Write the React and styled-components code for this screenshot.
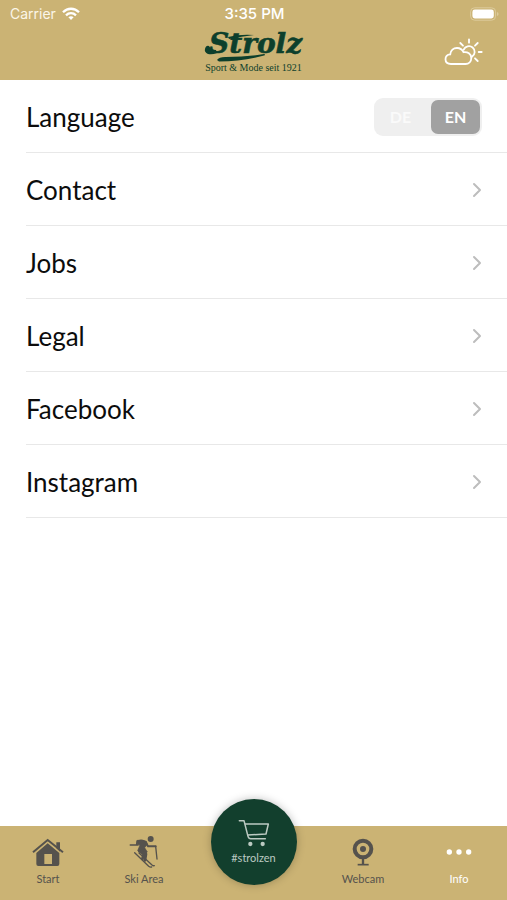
import React, { useState } from 'react';
import styled, { createGlobalStyle } from 'styled-components';
import { FiChevronRight } from 'react-icons/fi';

const GlobalStyle = createGlobalStyle`
  * {
    box-sizing: border-box;
  }
  body {
    margin: 0;
    background: #fff;
    font-family: Lato, "Liberation Sans", sans-serif;
  }
`;

const Page = styled.div`
  min-height: 100vh;
  display: flex;
  flex-direction: column;
`;

const Header = styled.header`
  background: #cbb374;
  color: #fff;
`;

const StatusBar = styled.div`
  height: 24px;
  padding: 4px 8px 0 10px;
  display: grid;
  grid-template-columns: 1fr auto 1fr;
  align-items: center;
  font-family: Inter, sans-serif;
  font-size: 14px;
  line-height: 20px;
`;

const Carrier = styled.div`
  display: flex;
  align-items: center;
  gap: 6px;
  color: #fbf6e8;
`;

const Clock = styled.time`
  font-size: 15px;
  font-weight: 500;
`;

const Battery = styled.div`
  display: flex;
  justify-content: flex-end;
`;

const Brand = styled.div`
  height: 56px;
  padding: 0 23px;
  display: grid;
  grid-template-columns: 1fr auto 1fr;
`;

const Logo = styled.a`
  grid-column: 2;
  display: flex;
  flex-direction: column;
  align-items: center;
  color: #0d3f2c;
  text-decoration: none;
`;

const Tagline = styled.span`
  font-family: "Liberation Serif", serif;
  font-size: 10px;
  line-height: 12px;
  white-space: nowrap;
`;

const WeatherButton = styled.button`
  justify-self: end;
  align-self: center;
  display: flex;
  padding: 0;
  border: 0;
  background: none;
  color: #fff;
  cursor: pointer;
`;

const List = styled.main`
  flex: 1;
  padding-left: 26px;
`;

const Row = styled.div`
  height: 73px;
  padding: 2px 25px 0 0;
  display: flex;
  align-items: center;
  justify-content: space-between;
  border-bottom: 1px solid #e8e8e8;
  color: #0c0c0c;
  font-size: 26px;
  line-height: 36px;
  text-decoration: none;
`;

const Chevron = styled(FiChevronRight)`
  width: 24px;
  height: 24px;
  margin-right: -7px;
  color: #bdbdbd;
`;

const Switch = styled.div`
  display: flex;
  gap: 6px;
  padding: 2px;
  border-radius: 9px;
  background: #efefef;
`;

const SwitchButton = styled.button`
  width: 49px;
  height: 34px;
  padding: 0;
  border: 0;
  border-radius: 7px;
  background: ${({ $active }) => ($active ? '#a1a1a1' : 'transparent')};
  color: ${({ $active }) => ($active ? '#fff' : '#fafafa')};
  font-family: Lato, sans-serif;
  font-size: 16px;
  font-weight: 700;
  line-height: 20px;
  cursor: pointer;
`;

const TabBar = styled.nav`
  position: sticky;
  bottom: 0;
  height: 74px;
  display: flex;
  background: #cbb374;
`;

const Tab = styled.a`
  flex: 1;
  padding-top: 9px;
  display: flex;
  flex-direction: column;
  align-items: center;
  gap: 3px;
  color: ${({ $active }) => ($active ? '#fff' : '#55524d')};
  text-decoration: none;
`;

const TabIcon = styled.span`
  height: 34px;
  display: flex;
  align-items: center;
`;

const TabLabel = styled.span`
  font-size: 11px;
  line-height: 14px;
`;

const ShopSlot = styled.div`
  width: 123px;
  display: flex;
  justify-content: center;
`;

const ShopButton = styled.a`
  width: 86px;
  height: 86px;
  margin-top: -27px;
  padding-top: 20px;
  display: flex;
  flex-direction: column;
  align-items: center;
  gap: 4px;
  border-radius: 50%;
  background: #123f2d;
  box-shadow: 0 0 8px rgba(0, 0, 0, 0.25);
  color: #bccac2;
  text-decoration: none;
`;

const WifiIcon = () => (
    <svg width="18" height="14" viewBox="0 0 18 14" fill="none" stroke="#fff" strokeWidth="2.3" aria-hidden="true">
        <path d="M1 5.2C5.6 0.6 12.4 0.6 17 5.2" />
        <path d="M4 8.3C6.9 5.5 11.1 5.5 14 8.3" />
        <path d="M6.4 10.3C7.9 9 10.1 9 11.6 10.3L9 13Z" fill="#fff" stroke="none" />
    </svg>
);

const BatteryIcon = () => (
    <svg width="29" height="14" viewBox="0 0 29 14" aria-hidden="true">
        <rect x="0.6" y="0.8" width="25" height="12.4" rx="4" fill="none" stroke="#dccb9c" />
        <rect x="2.4" y="2.6" width="21.4" height="8.8" rx="2.4" fill="#fff" />
        <path d="M27 5Q28.6 5.6 28.6 7T27 9Z" fill="#dccb9c" />
    </svg>
);

const LogoMark = () => (
    <svg width="100" height="38" viewBox="0 0 100 38" fill="currentColor" aria-hidden="true">
        <text
            x="5"
            y="29"
            fontFamily="DejaVu Serif, serif"
            fontSize="28"
            fontWeight="700"
            fontStyle="italic"
            stroke="currentColor"
            strokeWidth="0.6"
        >
            Strolz
        </text>
        <path d="M1 25Q2 21 5 22Q7 26 12 26L13 29Q8 31 4 30Q0 28 1 25Z" />
        <path d="M24 13Q36 10 50 11Q38 12.500 25 15Z" />
        <path d="M13 36Q15 32.800 22 33Q42 33 60 30Q62 30.500 60 31.500Q38 37.500 15 37.500Z" />
    </svg>
);

const WeatherIcon = () => (
    <svg width="42" height="32" viewBox="0 0 42 32" fill="none" stroke="currentColor" strokeWidth="1.8" strokeLinecap="round" aria-hidden="true">
        <path d="M9 28C5.5 28 3.5 26 3.5 23.300C3.5 20.500 5.5 18.600 8.2 18.400C8.5 14.500 11.500 12 15 12C18 12 20.300 13.500 21.500 16.200C25.500 15.500 29.300 18 29.300 22C29.300 25.500 26.800 28 23.500 28Z" />
        <path d="M21.700 13.700A5.7 5.7 0 1 1 30 20.700" />
        <path d="M27 3.3V6.7M33 9.7L35.700 7M36.700 16H39.700M33 22.300L35.700 25M21 9.7L18.300 7" />
    </svg>
);

const HomeIcon = () => (
    <svg width="32" height="28" viewBox="0 0 96 84" aria-hidden="true">
        <path d="M73 31V13H84V41Z" fill="currentColor" />
        <path d="M3 43L47 6L93 43" fill="none" stroke="currentColor" strokeWidth="6" />
        <path fillRule="evenodd" d="M47 16L82 45V78Q82 84 76 84H19Q13 84 13 78V45ZM37 48V78H60V48Z" fill="currentColor" />
    </svg>
);

const SkiIcon = () => (
    <svg width="32" height="34" viewBox="0 0 96 102" fill="none" stroke="currentColor" strokeLinecap="round" strokeLinejoin="round" aria-hidden="true">
        <circle cx="68" cy="12" r="9" fill="currentColor" stroke="none" />
        <path d="M28 16Q42 12 55 19L58 28L50 38L58 51L44 59L29 47L36 30L28 28Z" fill="currentColor" strokeWidth="2" />
        <path d="M53 21L60 34H83" strokeWidth="6" />
        <path d="M83 34L87 72" strokeWidth="4" />
        <path d="M28 18L26 30M7 30H30" strokeWidth="5" />
        <path d="M34 48L48 55L43 72M50 48L54 57L51 76" strokeWidth="8" />
        <path d="M20 53L62 94Q66 97 71 96M33 54L72 90Q76 93 79 92" strokeWidth="4" />
    </svg>
);

const WebcamIcon = () => (
    <svg width="22" height="28" viewBox="0 0 66 84" fill="none" stroke="currentColor" aria-hidden="true">
        <circle cx="33" cy="33" r="25" strokeWidth="12" />
        <circle cx="33" cy="33" r="9" fill="currentColor" stroke="none" />
        <path d="M33 62V80" strokeWidth="7" />
        <path d="M17 80H50" strokeWidth="5" />
    </svg>
);

const MoreIcon = () => (
    <svg width="26" height="6" viewBox="0 0 78 18" fill="currentColor" aria-hidden="true">
        <circle cx="10" cy="9" r="8" />
        <circle cx="39" cy="9" r="8" />
        <circle cx="68" cy="9" r="8" />
    </svg>
);

const CartIcon = () => (
    <svg width="32" height="28" viewBox="0 0 96 84" fill="none" stroke="currentColor" strokeWidth="4.5" strokeLinecap="round" strokeLinejoin="round" aria-hidden="true">
        <path d="M4 5H18L30 52Q32 59 38 59H82" />
        <path d="M22 15H91L84 45L29 48" />
        <circle cx="37" cy="75" r="6.5" fill="currentColor" stroke="none" />
        <circle cx="74" cy="75" r="6.5" fill="currentColor" stroke="none" />
    </svg>
);

const links = ['Contact', 'Jobs', 'Legal', 'Facebook', 'Instagram'];

const languages = ['DE', 'EN'];

const TabLink = ({ icon: Icon, label, active }) => (
    <Tab href={'#' + label.toLowerCase().replace(' ', '-')} $active={active}>
        <TabIcon>
            <Icon />
        </TabIcon>
        <TabLabel>{label}</TabLabel>
    </Tab>
);

const App = () => {
    const [language, setLanguage] = useState('EN');
    return (
        <>
            <GlobalStyle />
            <Page>
                <Header>
                    <StatusBar>
                        <Carrier>
                            Carrier
                            <WifiIcon />
                        </Carrier>
                        <Clock>3:35 PM</Clock>
                        <Battery>
                            <BatteryIcon />
                        </Battery>
                    </StatusBar>
                    <Brand>
                        <Logo href="#start">
                            <LogoMark />
                            <Tagline>Sport &amp; Mode seit 1921</Tagline>
                        </Logo>
                        <WeatherButton type="button" aria-label="Weather">
                            <WeatherIcon />
                        </WeatherButton>
                    </Brand>
                </Header>
                <List>
                    <Row>
                        <span id="language">Language</span>
                        <Switch role="group" aria-labelledby="language">
                            {languages.map((item) => (
                                <SwitchButton
                                    key={item}
                                    type="button"
                                    $active={item === language}
                                    aria-pressed={item === language}
                                    onClick={() => setLanguage(item)}
                                >
                                    {item}
                                </SwitchButton>
                            ))}
                        </Switch>
                    </Row>
                    {links.map((item) => (
                        <Row as="a" href={'#' + item.toLowerCase()} key={item}>
                            {item}
                            <Chevron />
                        </Row>
                    ))}
                </List>
                <TabBar>
                    <TabLink icon={HomeIcon} label="Start" />
                    <TabLink icon={SkiIcon} label="Ski Area" />
                    <ShopSlot>
                        <ShopButton href="#strolzen">
                            <CartIcon />
                            <TabLabel>#strolzen</TabLabel>
                        </ShopButton>
                    </ShopSlot>
                    <TabLink icon={WebcamIcon} label="Webcam" />
                    <TabLink icon={MoreIcon} label="Info" active />
                </TabBar>
            </Page>
        </>
    );
};

export default App;
